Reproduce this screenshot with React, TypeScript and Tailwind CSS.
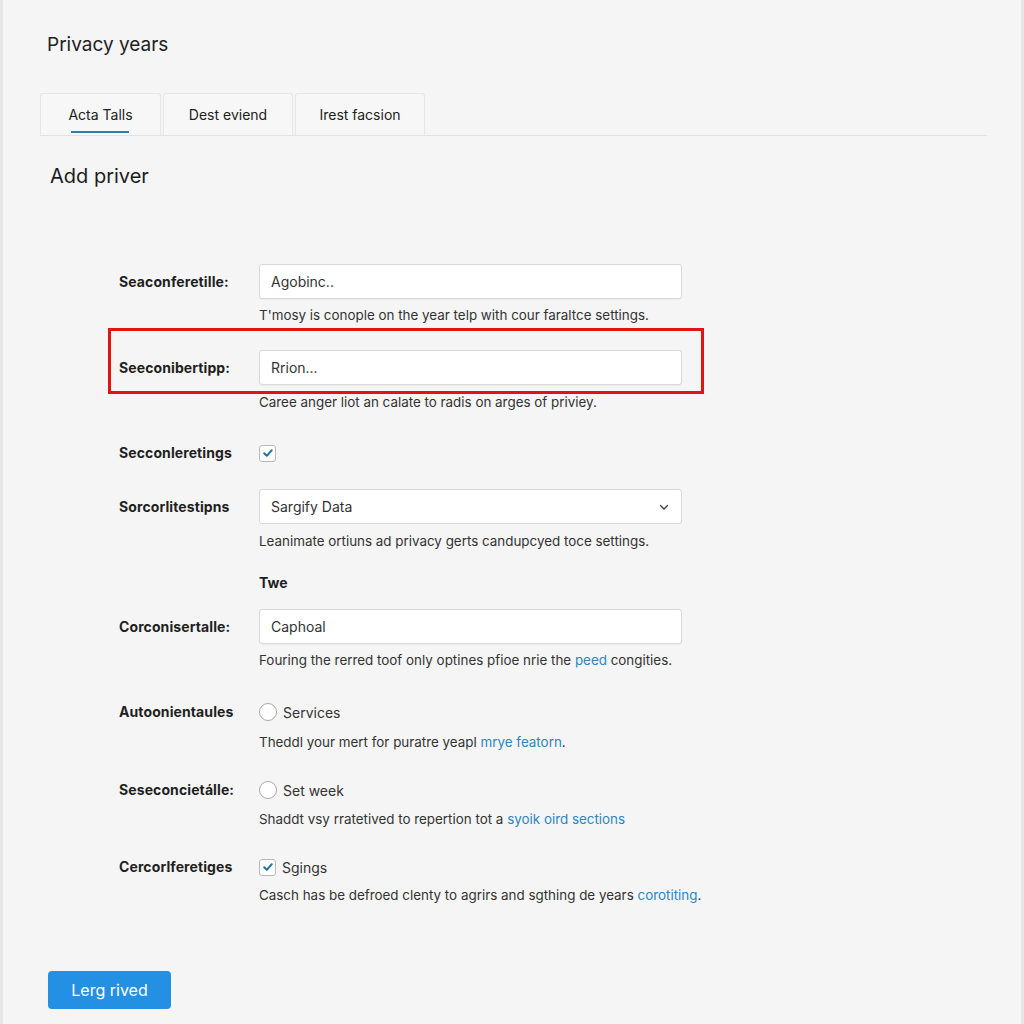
import React from "react";

const font = { fontFamily: "Inter, 'Open Sans', 'Liberation Sans', sans-serif" };

function Label({ children }: { children: React.ReactNode }) {
  return (
    <div className="w-[140px] shrink-0 text-[14px] font-bold text-[#1f1f1f] leading-[20px] tracking-[0.1px]">
      {children}
    </div>
  );
}

function Help({ children, className = "" }: { children: React.ReactNode; className?: string }) {
  return (
    <div className={`ml-[140px] text-[13.4px] leading-[18px] text-[#333] ${className}`}>{children}</div>
  );
}

function TextInput({ value }: { value: string }) {
  return (
    <div className="w-[423px] h-[35px] bg-white border border-[#d8d8d8] rounded-[3px] shadow-[0_1px_1px_rgba(0,0,0,0.04)] flex items-center px-[11px] text-[14px] text-[#333]">
      {value}
    </div>
  );
}

function Check() {
  return (
    <div className="w-[17px] h-[17px] rounded-[3px] border border-[#b9b9b9] bg-white flex items-center justify-center">
      <svg width="12" height="12" viewBox="0 0 12 12">
        <path d="M2.2 6.3 L4.8 8.8 L9.8 3.2" fill="none" stroke="#1f6fa8" strokeWidth="2" strokeLinecap="round" strokeLinejoin="round" />
      </svg>
    </div>
  );
}

function Radio() {
  return <div className="w-[18px] h-[18px] rounded-full border border-[#a8a8a8] bg-white" />;
}

export default function App() {
  return (
    <div style={font} className="w-[1024px] h-[1024px] bg-[#f5f5f5] border-l-[3px] border-r-[3px] border-[#e6e6e6] overflow-hidden">
      <div className="pl-[37px] pt-[33px]">
        <div className="pl-[7px] text-[19px] leading-[24px] text-[#222]">Privacy years</div>

        {/* Tabs */}
        <div className="mt-[36px] w-[947px] flex items-end border-b border-[#e2e2e2]">
          <div className="relative w-[121px] h-[42px] bg-[#f7f7f7] border border-b-0 border-[#e6e6e6] rounded-t-[3px] flex items-center justify-center text-[14px] text-[#222]">
            Acta Talls
            <div className="absolute left-[30px] w-[58px] bottom-[2px] h-[2px] bg-[#2f7fb5]" />
          </div>
          <div className="ml-[2px] w-[130px] h-[42px] bg-[#f7f7f7] border border-b-0 border-[#e6e6e6] rounded-t-[3px] flex items-center justify-center text-[14px] text-[#222]">
            Dest eviend
          </div>
          <div className="ml-[2px] w-[130px] h-[42px] bg-[#f7f7f7] border border-b-0 border-[#e6e6e6] rounded-t-[3px] flex items-center justify-center text-[14px] text-[#222]">
            Irest facsion
          </div>
        </div>

        <div className="mt-[28px] pl-[10px] text-[20px] leading-[24px] text-[#1c1c1c]">Add priver</div>

        {/* Form */}
        <div className="pl-[79px]">
          {/* Row 1 */}
          <div className="mt-[76px] flex items-center">
            <Label>Seaconferetille:</Label>
            <TextInput value="Agobinc.." />
          </div>
          <Help className="mt-[7px]">T'mosy is conople on the year telp with cour faraltce settings.</Help>

          {/* Row 2 with red annotation */}
          <div className="relative mt-[26px] flex items-center">
            <div className="absolute left-[-11px] top-[-22px] w-[596px] h-[66px] border-[3px] border-[#e3140f] pointer-events-none" />
            <Label>Seeconibertipp:</Label>
            <TextInput value="Rrion..." />
          </div>
          <Help className="mt-[8px]">Caree anger liot an calate to radis on arges of priviey.</Help>

          {/* Row 3 */}
          <div className="mt-[30px] h-[24px] flex items-center">
            <Label>Secconleretings</Label>
            <Check />
          </div>

          {/* Row 4 select */}
          <div className="mt-[24px] flex items-center">
            <Label>Sorcorlitestipns</Label>
            <div className="w-[423px] h-[35px] bg-white border border-[#d8d8d8] rounded-[3px] flex items-center justify-between px-[11px] text-[14px] text-[#333]">
              <span>Sargify Data</span>
              <svg width="12" height="12" viewBox="0 0 12 12">
                <path d="M2.5 4.5 L6 8 L9.5 4.5" fill="none" stroke="#444" strokeWidth="1.4" strokeLinecap="round" strokeLinejoin="round" />
              </svg>
            </div>
          </div>
          <Help className="mt-[8px]">Leanimate ortiuns ad privacy gerts candupcyed toce settings.</Help>

          <div className="mt-[24px] ml-[140px] text-[14px] leading-[18px] font-bold text-[#1f1f1f]">Twe</div>

          {/* Row 5 */}
          <div className="mt-[17px] flex items-center">
            <Label>Corconisertalle:</Label>
            <TextInput value="Caphoal" />
          </div>
          <Help className="mt-[7px]">
            Fouring the rerred toof only optines pfioe nrie the <span className="text-[#2b86c4]">peed</span> congities.
          </Help>

          {/* Row 6 */}
          <div className="mt-[31px] h-[24px] flex items-center">
            <Label>Autoonientaules</Label>
            <Radio />
            <span className="ml-[6px] text-[14px] text-[#333]">Services</span>
          </div>
          <Help className="mt-[9px]">
            Theddl your mert for puratre yeapl <span className="text-[#2b86c4]">mrye featorn</span>.
          </Help>

          {/* Row 7 */}
          <div className="mt-[27px] h-[24px] flex items-center">
            <Label>Seseconcietálle:</Label>
            <Radio />
            <span className="ml-[6px] text-[14px] text-[#333]">Set week</span>
          </div>
          <Help className="mt-[8px]">
            Shaddt vsy rratetived to repertion tot a <span className="text-[#2b86c4]">syoik oird sections</span>
          </Help>

          {/* Row 8 */}
          <div className="mt-[27px] h-[24px] flex items-center">
            <Label>Cercorlferetiges</Label>
            <Check />
            <span className="ml-[6px] text-[14px] text-[#333]">Sgings</span>
          </div>
          <Help className="mt-[7px]">
            Casch has be defroed clenty to agrirs and sgthing de years <span className="text-[#2b86c4]">corotiting</span>.
          </Help>
        </div>

        <button className="mt-[67px] ml-[8px] w-[123px] h-[38px] rounded-[4px] bg-[#2490e3] text-white text-[16px] flex items-center justify-center">
          Lerg rived
        </button>
      </div>
    </div>
  );
}
